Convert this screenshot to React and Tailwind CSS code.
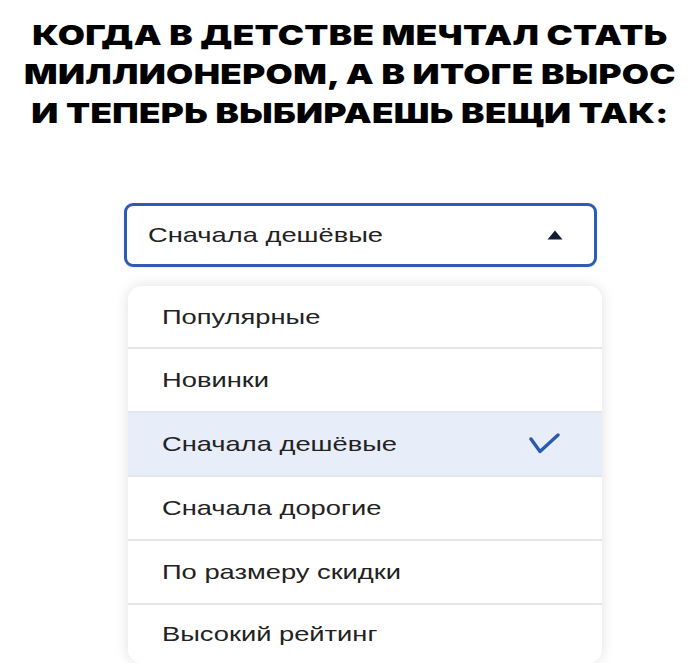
import React from "react";

const options = [
  "Популярные",
  "Новинки",
  "Сначала дешёвые",
  "Сначала дорогие",
  "По размеру скидки",
  "Высокий рейтинг",
];

// the source picture is stretched sideways, so the labels are widened too
const Label = ({ children }) => (
  <span className="inline-block origin-left scale-x-[1.3] text-[21px] text-[#222222]">
    {children}
  </span>
);

const SortSelect = () => {
  const selected = "Сначала дешёвые";
  return (
    <div className="ml-[124px] w-[478px]">
      {/* trigger */}
      <div className="w-[473px] h-[64px] border-[3px] border-[#2d5cb5] rounded-[9px] bg-white flex items-center justify-between pl-[21px] pr-[31px] shadow-[0_1px_3px_rgba(0,0,0,0.08)]">
        <Label>{selected}</Label>
        <svg width="16" height="10" viewBox="0 0 16 10">
          <path d="M8 0.5 L15.5 9.5 L0.5 9.5 Z" fill="#131d33" />
        </svg>
      </div>

      {/* menu */}
      <div className="mt-[19px] ml-[4px] w-[474px] bg-white rounded-[14px] shadow-[0_0_14px_rgba(0,0,0,0.13)] overflow-hidden">
        {options.map((o, i) => (
          <div
            key={o}
            className={
              (o === selected ? "bg-[#e7edf9] " : "bg-white ") +
              (i === 0 ? "h-[61px] " : i === options.length - 1 ? "h-[60px] " : "h-[64px] ") +
              (i > 0 ? "border-t-2 border-[#e3e5e8] " : "") +
              "flex items-center justify-between pl-[34px] pr-[42px]"
            }
          >
            <Label>{o}</Label>
            {o === selected && (
              <svg width="31" height="22" viewBox="0 0 31 22">
                <path d="M2 6 L11 18.5 L29 2" fill="none" stroke="#2c5aae" strokeWidth="3.4" strokeLinecap="round" strokeLinejoin="round" />
              </svg>
            )}
          </div>
        ))}
      </div>
    </div>
  );
};

export default function App() {
  return (
    <div className="w-[700px] h-[663px] overflow-hidden bg-white font-['Liberation_Sans',Arial,sans-serif]">
      <h1 className="pt-[16px] text-center font-['Inter',sans-serif] font-black uppercase text-black text-[27px] leading-[39px] tracking-[0.01em] scale-x-[1.3]">
        Когда в детстве мечтал стать
        <br />
        миллионером, а в итоге вырос
        <br />
        и теперь выбираешь вещи так:
      </h1>
      <div className="mt-[70px]">
        <SortSelect />
      </div>
    </div>
  );
}
